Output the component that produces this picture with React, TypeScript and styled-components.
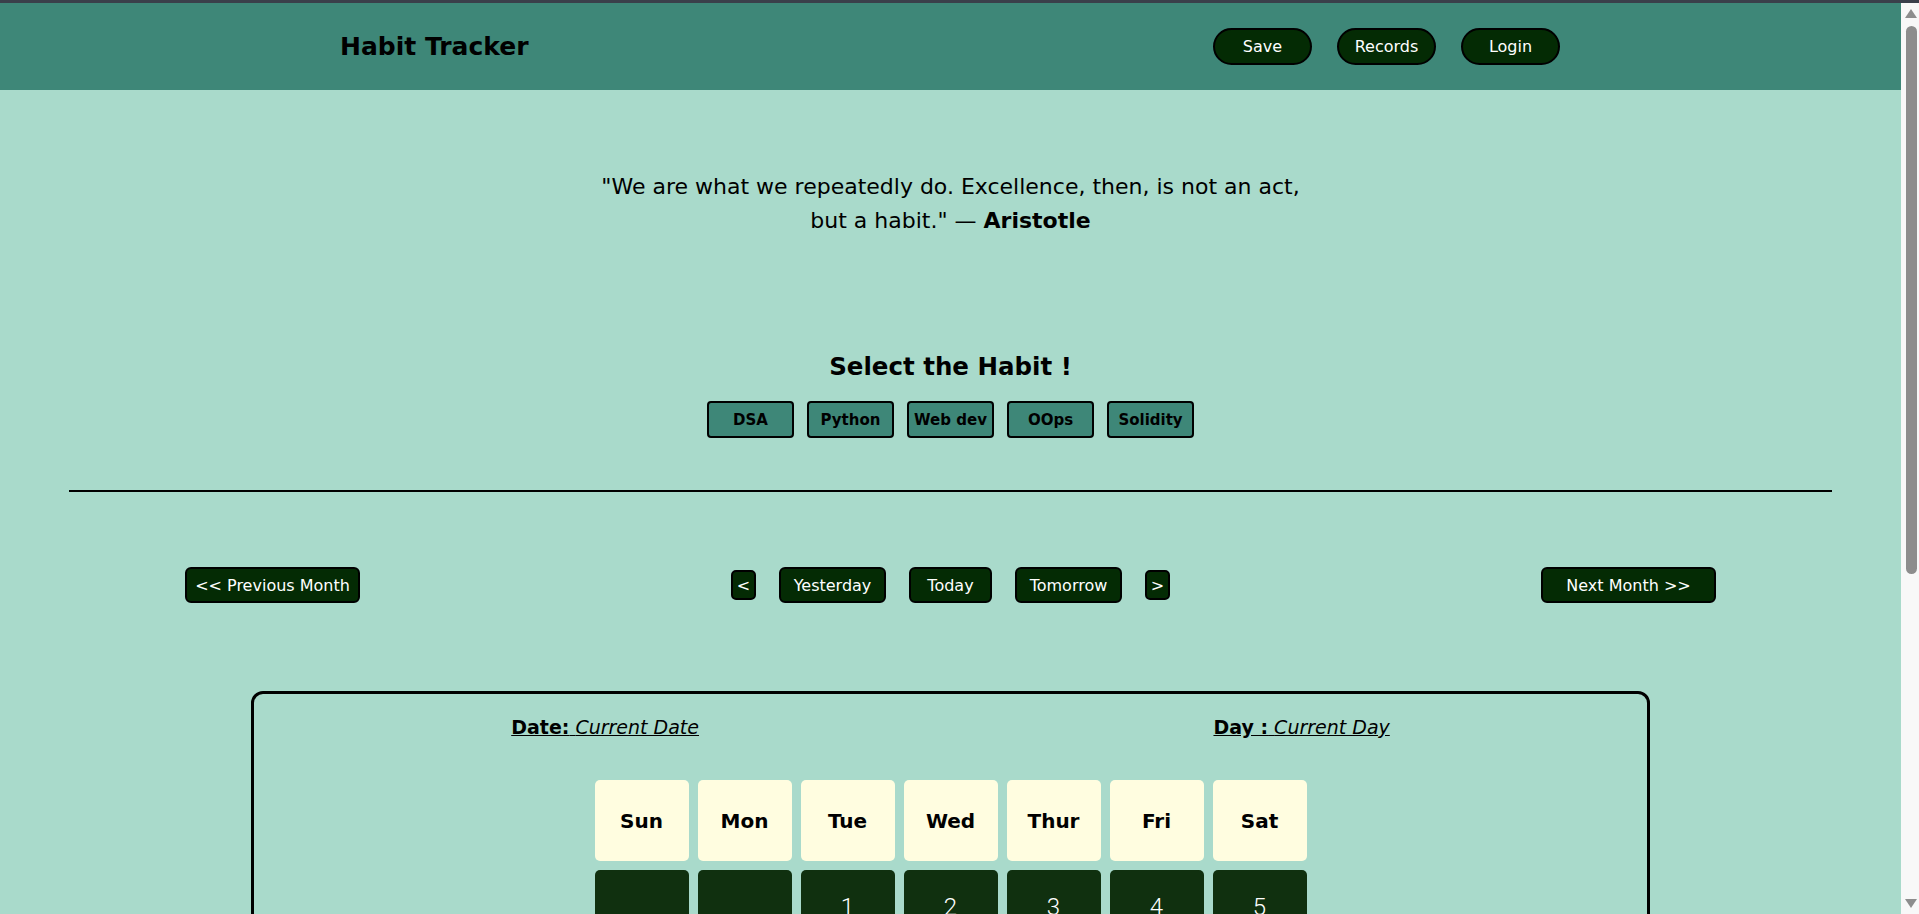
import React from "react";
import styled, { createGlobalStyle } from "styled-components";

const GlobalStyle = createGlobalStyle`
  html, body { margin: 0; padding: 0; }
  body {
    background: #a9dacb;
    font-family: "DejaVu Sans", "Open Sans", sans-serif;
    color: #000;
  }
  * { box-sizing: border-box; }
`;

const TopStrip = styled.div`
  height: 3px;
  background: #3a3f4a;
`;

const Page = styled.div`
  margin-right: 18px;
`;

const ScrollTrack = styled.div`
  position: fixed;
  top: 3px;
  right: 0;
  bottom: 0;
  width: 18px;
  background: #f8f8f8;
  display: flex;
  flex-direction: column;
  align-items: center;
  padding: 6px 0 6px 2px;
  gap: 8px;
`;

const ArrowUp = styled.div`
  width: 0;
  height: 0;
  border-left: 6px solid transparent;
  border-right: 6px solid transparent;
  border-bottom: 9px solid #8d8d8d;
`;

const ArrowDown = styled.div`
  width: 0;
  height: 0;
  margin-top: auto;
  border-left: 6px solid transparent;
  border-right: 6px solid transparent;
  border-top: 9px solid #8d8d8d;
`;

const Thumb = styled.div`
  width: 11px;
  height: 548px;
  background: #8d8d8d;
  border-radius: 6px;
`;

const Header = styled.header`
  height: 87px;
  background: #3e8778;
  display: flex;
  align-items: center;
  justify-content: space-between;
  padding: 0 341px 0 340px;
`;

const Title = styled.h1`
  margin: 0;
  font-size: 25px;
  font-weight: 700;
  color: #000;
`;

const NavGroup = styled.nav`
  display: flex;
  gap: 25px;
`;

const PillButton = styled.button`
  width: 99px;
  height: 37px;
  border-radius: 20px;
  border: 2px solid #000;
  background: #042b04;
  color: #fff;
  font-family: inherit;
  font-size: 16px;
  cursor: pointer;
  padding: 0;
`;

const Quote = styled.p`
  margin: 80px auto 0;
  text-align: center;
  font-size: 22px;
  line-height: 34px;
  strong { font-weight: 700; }
`;

const SectionTitle = styled.h2`
  margin: 109px 0 0;
  text-align: center;
  font-size: 24.5px;
  line-height: 40px;
  font-weight: 700;
`;

const HabitRow = styled.div`
  display: flex;
  justify-content: center;
  gap: 13px;
  margin-top: 14px;
`;

const HabitButton = styled.button`
  width: 87px;
  height: 37px;
  border: 2px solid #000;
  border-radius: 4px;
  background: #3e8778;
  color: #000;
  font-family: inherit;
  font-size: 15px;
  font-weight: 700;
  padding: 0;
`;

const Divider = styled.hr`
  margin: 52px 69px 0;
  border: none;
  border-top: 2px solid #000;
`;

const DateNav = styled.div`
  display: flex;
  align-items: center;
  justify-content: space-between;
  padding: 0 185px;
  margin-top: 75px;
`;

const NavCenter = styled.div`
  display: flex;
  align-items: center;
  gap: 23px;
`;

const DarkButton = styled.button<{ $w: number; $h?: number }>`
  width: ${(p) => p.$w}px;
  height: ${(p) => p.$h ?? 36}px;
  border: 2px solid #000;
  border-radius: ${(p) => ((p.$h ?? 36) < 34 ? 5 : 6)}px;
  background: #042b04;
  color: #fff;
  font-family: inherit;
  font-size: 16px;
  padding: 0;
`;

const Card = styled.section`
  width: 1399px;
  margin: 88px auto 60px;
  border: 3px solid #000;
  border-radius: 12px;
  padding: 21px 0 40px;
`;

const InfoRow = styled.div`
  display: flex;
  justify-content: space-around;
  font-size: 19px;
  line-height: 24px;
`;

const Info = styled.div`
  text-decoration: underline;
  b { font-weight: 700; }
  i { font-style: italic; }
`;

const Grid = styled.div`
  display: grid;
  grid-template-columns: repeat(7, 94px);
  gap: 9px;
  justify-content: center;
  margin-top: 41px;
`;

const HeadCell = styled.div`
  height: 81px;
  background: #fffde0;
  border-radius: 5px;
  display: flex;
  align-items: center;
  justify-content: center;
  font-size: 20px;
  font-weight: 700;
`;

const DayCell = styled.div`
  height: 81px;
  background: #10300f;
  border-radius: 5px;
  display: flex;
  align-items: flex-end;
  justify-content: center;
  padding-bottom: 30px;
  color: #fff;
  font-family: Roboto, sans-serif;
  font-weight: 300;
  font-size: 24px;
`;

const days = ["Sun", "Mon", "Tue", "Wed", "Thur", "Fri", "Sat"];
const cells: (number | null)[] = [null, null, ...Array.from({ length: 31 }, (_, i) => i + 1)];

export default function App() {
  return (
    <>
      <GlobalStyle />
      <TopStrip />
      <ScrollTrack>
        <ArrowUp />
        <Thumb />
        <ArrowDown />
      </ScrollTrack>
      <Page>
        <Header>
          <Title>Habit Tracker</Title>
          <NavGroup>
            <PillButton>Save</PillButton>
            <PillButton>Records</PillButton>
            <PillButton>Login</PillButton>
          </NavGroup>
        </Header>
        <Quote>
          "We are what we repeatedly do. Excellence, then, is not an act,
          <br />
          but a habit." — <strong>Aristotle</strong>
        </Quote>
        <SectionTitle>Select the Habit !</SectionTitle>
        <HabitRow>
          {["DSA", "Python", "Web dev", "OOps", "Solidity"].map((h) => (
            <HabitButton key={h}>{h}</HabitButton>
          ))}
        </HabitRow>
        <Divider />
        <DateNav>
          <DarkButton $w={175}>&lt;&lt; Previous Month</DarkButton>
          <NavCenter>
            <DarkButton $w={25} $h={30}>&lt;</DarkButton>
            <DarkButton $w={107}>Yesterday</DarkButton>
            <DarkButton $w={83}>Today</DarkButton>
            <DarkButton $w={107}>Tomorrow</DarkButton>
            <DarkButton $w={25} $h={30}>&gt;</DarkButton>
          </NavCenter>
          <DarkButton $w={175}>Next Month &gt;&gt;</DarkButton>
        </DateNav>
        <Card>
          <InfoRow>
            <Info>
              <b>Date:</b> <i>Current Date</i>
            </Info>
            <Info>
              <b>Day :</b> <i>Current Day</i>
            </Info>
          </InfoRow>
          <Grid>
            {days.map((d) => (
              <HeadCell key={d}>{d}</HeadCell>
            ))}
            {cells.map((c, i) => (
              <DayCell key={i}>{c ?? ""}</DayCell>
            ))}
          </Grid>
        </Card>
      </Page>
    </>
  );
}
